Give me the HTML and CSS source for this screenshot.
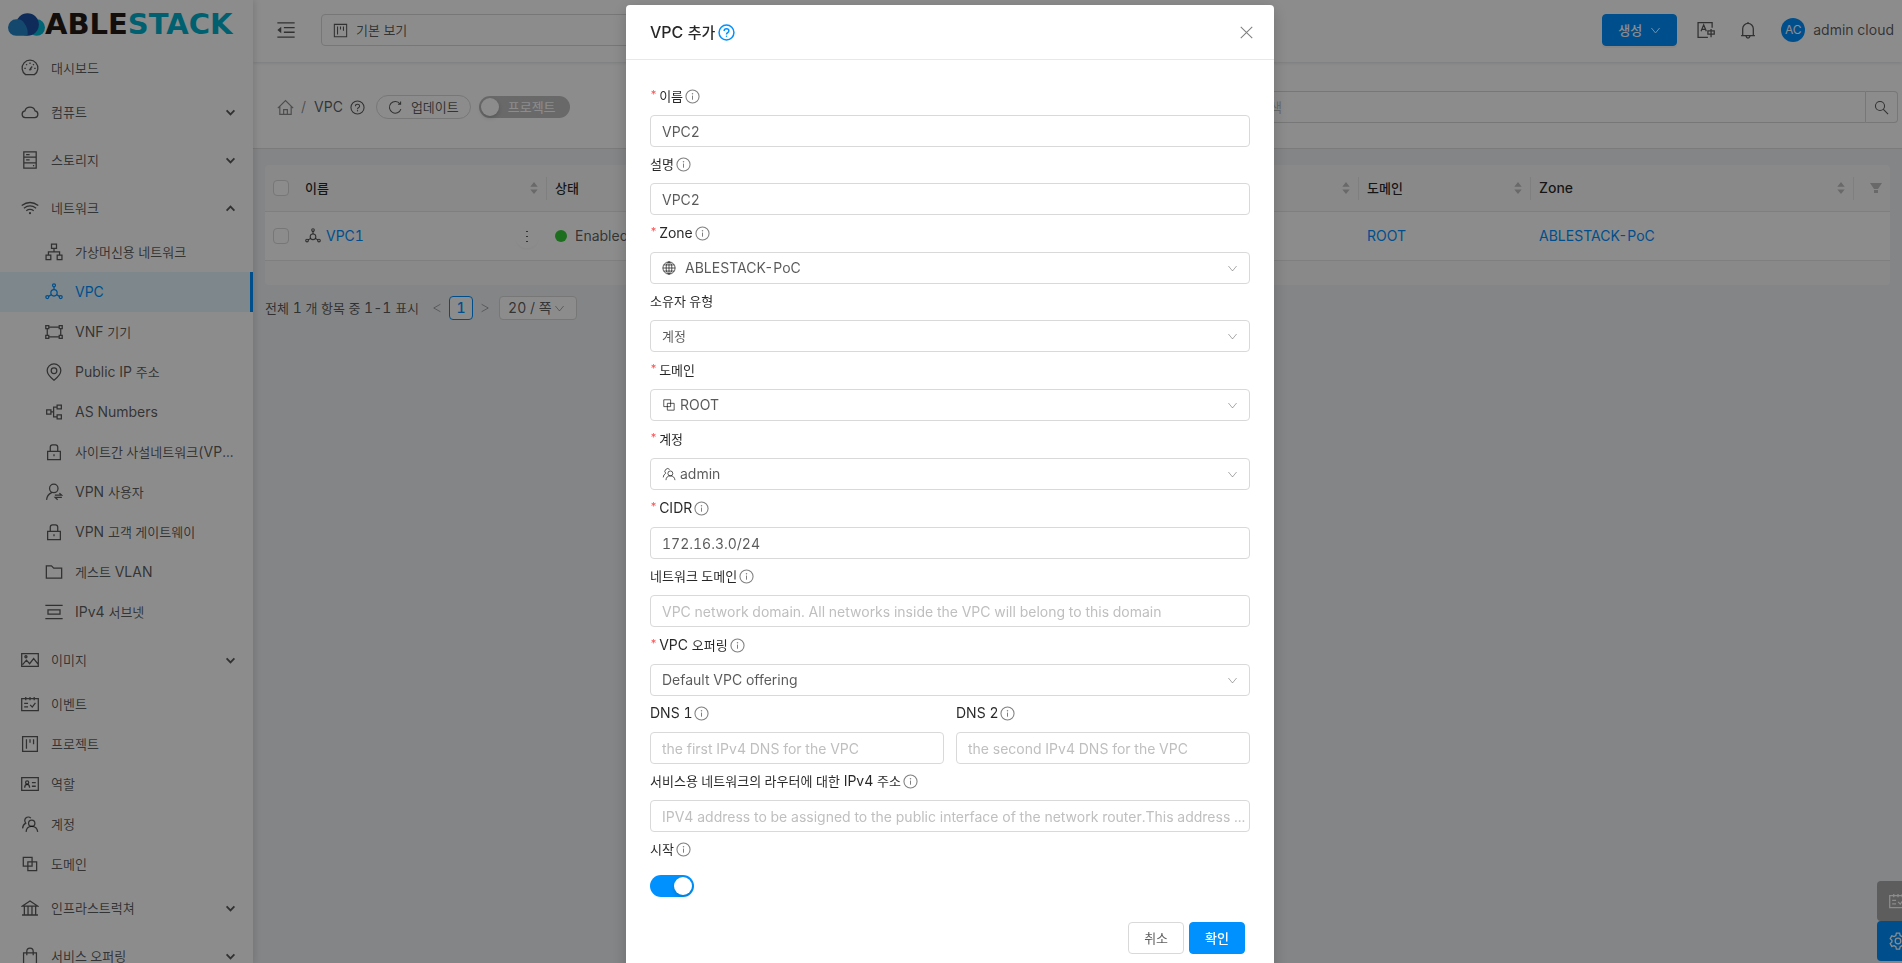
FILE: index.html
```html
<!DOCTYPE html>
<html lang="ko">
<head>
<meta charset="utf-8">
<title>VPC - ABLESTACK</title>
<link rel="stylesheet" href="styles.css">
</head>
<body>
<svg class="sprite" aria-hidden="true">
  <symbol id="dashboard" viewBox="0 0 1024 1024"><path d="M262 888a448 448 0 1 1 500 0zM512 200v80M290 292l56 56M734 292l-56 56M190 528h84M750 528h84M512 560l130-130M475 590a50 50 0 1 0 66-66"/></symbol>
  <symbol id="cloud" viewBox="0 0 1024 1024"><path d="M240 832a192 192 0 0 1-18-380 304 304 0 0 1 580 0 192 192 0 0 1-18 380z"/></symbol>
  <symbol id="storage" viewBox="0 0 1024 1024"><path d="M160 48h704v928H160zM160 352h704M160 672h704M290 200h200M290 510h200M680 826h70"/></symbol>
  <symbol id="wifi" viewBox="0 0 1024 1024"><path d="M40 370q472-340 944 0M165 520q347-250 694 0M300 670q212-150 424 0"/><circle class="solid" cx="512" cy="806" r="62"/></symbol>
  <symbol id="apartment" viewBox="0 0 1024 1024"><path d="M370 60h284v250H370zM60 690h270v260H60zM694 690h270v260H694zM512 310v190M195 690V500h634v190"/></symbol>
  <symbol id="vpc" viewBox="0 0 1024 1024"><circle cx="512" cy="560" r="180"/><circle cx="512" cy="130" r="84"/><circle cx="130" cy="800" r="84"/><circle cx="894" cy="800" r="84"/><path d="M512 214v166M204 760l150-90M820 760l-150-90"/></symbol>
  <symbol id="gateway" viewBox="0 0 1024 1024"><path d="M44 154h170v170H44zM810 154h170v170H810zM44 700h170v170H44zM810 700h170v170H810zM214 239h596M214 785h596M129 324v376M895 324v376"/></symbol>
  <symbol id="pin" viewBox="0 0 1024 1024"><path d="M512 976C330 840 124 680 124 430a388 376 0 0 1 776 0c0 250-206 410-388 546z"/><circle cx="512" cy="440" r="160"/></symbol>
  <symbol id="nodes" viewBox="0 0 1024 1024"><path d="M96 390h240v240H96zM690 120h240v220H690zM690 680h240v220H690zM336 510h150M690 230H490v560h200"/></symbol>
  <symbol id="lock" viewBox="0 0 1024 1024"><path d="M150 470h724v470H150zM300 470V240q0-130 130-130h164q130 0 130 130v230M512 640v120"/></symbol>
  <symbol id="userswap" viewBox="0 0 1024 1024"><circle cx="500" cy="310" r="240"/><path d="M90 960q20-290 290-410M560 690h380l-120-110M960 820H580l140 130"/></symbol>
  <symbol id="folder" viewBox="0 0 1024 1024"><path d="M76 166h290l130 126h452v566H76z"/></symbol>
  <symbol id="subnet" viewBox="0 0 1024 1024"><path d="M20 140h984M20 884h984M170 388h684v248H170z"/></symbol>
  <symbol id="image" viewBox="0 0 1024 1024"><path d="M40 150h944v724H40zM90 780l220-260 180 200 230-290 250 320"/><circle cx="280" cy="330" r="60"/></symbol>
  <symbol id="event" viewBox="0 0 1024 1024"><path d="M40 200h944v690H40zM270 110v190M512 110v190M750 110v190M180 480h220M180 680h220M520 560l120 130 180-240"/></symbol>
  <symbol id="project" viewBox="0 0 1024 1024"><path d="M92 92h840v840H92zM310 240v540M512 240v200M714 240v290"/></symbol>
  <symbol id="idcard" viewBox="0 0 1024 1024"><path d="M40 150h944v724H40zM620 430h220M620 640h220M210 720q0-190 140-190t140 190"/><circle cx="350" cy="430" r="90"/></symbol>
  <symbol id="team" viewBox="0 0 1024 1024"><circle cx="610" cy="470" r="180"/><path d="M290 960q20-310 320-310t340 310M90 760q10-210 180-300A200 200 0 1 1 560 180"/></symbol>
  <symbol id="domain" viewBox="0 0 1024 1024"><path d="M130 130h500v500H130zM390 390h500v500H390z"/></symbol>
  <symbol id="bank" viewBox="0 0 1024 1024"><path d="M80 400L512 110l432 290zM190 400v480M400 400v480M624 400v480M834 400v480M60 910h904"/></symbol>
  <symbol id="bag" viewBox="0 0 1024 1024"><path d="M146 330h732v620H146zM330 470V260a182 190 0 0 1 364 0v210"/></symbol>
  <symbol id="chev" viewBox="0 0 1024 1024"><path d="M130 280l382 460 382-460"/></symbol>
  <symbol id="arrow" viewBox="0 0 1024 1024"><path d="M150 320l362 370 362-370"/></symbol>
  <symbol id="left" viewBox="0 0 1024 1024"><path d="M860 130L180 512l680 382"/></symbol>
  <symbol id="right" viewBox="0 0 1024 1024"><path d="M164 130l680 382-680 382"/></symbol>
  <symbol id="fold" viewBox="0 0 1024 1024"><path d="M20 100h984M390 380h614M390 640h614M20 920h984"/><path class="solid" d="M20 512L240 330v364z"/></symbol>
  <symbol id="home" viewBox="0 0 1024 1024"><path d="M50 550L512 90l462 460M170 440v490h684V440M400 930V640h224v290"/></symbol>
  <symbol id="question" viewBox="0 0 1024 1024"><circle cx="512" cy="512" r="448"/><path d="M370 420q0-130 142-130t142 120q0 80-80 115-62 28-62 110"/><circle class="solid" cx="512" cy="735" r="44"/></symbol>
  <symbol id="info" viewBox="0 0 1024 1024"><circle cx="512" cy="512" r="448"/><path d="M512 450v280"/><circle class="solid" cx="512" cy="330" r="50"/></symbol>
  <symbol id="reload" viewBox="0 0 1024 1024"><path d="M880 620A400 400 0 1 1 820 260M860 110v180H680"/></symbol>
  <symbol id="search" viewBox="0 0 1024 1024"><circle cx="410" cy="410" r="310"/><path d="M640 640l320 320"/></symbol>
  <symbol id="bell" viewBox="0 0 1024 1024"><path d="M120 830h784M210 830V440a302 302 0 0 1 604 0v390M512 50v90M400 860q20 110 112 110t112-110"/></symbol>
  <symbol id="translate" viewBox="0 0 1024 1024"><path d="M860 390V90H60v840h560M230 580l150-360 150 360M280 470h200M620 560h360v180H620zM800 450v480"/></symbol>
  <symbol id="close" viewBox="0 0 1024 1024"><path d="M120 120l784 784M904 120L120 904"/></symbol>
  <symbol id="globe" viewBox="0 0 1024 1024"><circle cx="512" cy="512" r="448"/><ellipse cx="512" cy="512" rx="210" ry="448"/><path d="M512 64v896M64 512h896M130 290h764M130 734h764"/></symbol>
  <symbol id="sorter" viewBox="0 0 8 14"><path class="solid" d="M0 5l4-5 4 5zM0 8l4 5 4-5z"/></symbol>
  <symbol id="filter" viewBox="0 0 12 12"><path class="solid" d="M0 1h12L8 7H4zM4 8h4v3H4z"/></symbol>
  <symbol id="more" viewBox="0 0 4 14"><path class="solid" d="M1 2h2v1H1zM1 7h2v1H1zM1 12h2v1H1z"/></symbol>
  <symbol id="gear" viewBox="0 0 1024 1024"><circle cx="512" cy="512" r="160"/><path d="M420 70h184l30 130 100 58 130-38 92 158-98 92v100l98 92-92 158-130-38-100 58-30 130H420l-30-130-100-58-130 38-92-158 98-92V470l-98-92 92-158 130 38 100-58z"/></symbol>
</svg>

<div class="app">
  <aside class="sidebar">
    <div class="brand">
      <svg class="brand-mark" viewBox="0 0 36 22"><circle cx="28" cy="14" r="8" fill="#00b8d4"/><circle cx="19" cy="11" r="11" fill="#1d4fa3"/><path d="M8 6a8 8 0 0 1 8 4q4 5 3 12H8A8 8 0 0 1 8 6z" fill="#2585c7"/></svg>
      <span class="brand-name"><span class="brand-dark">ABLE</span><span class="brand-teal">STACK</span></span>
    </div>
    <nav class="menu">
      <a class="item ko" href="#"><svg class="icon"><use href="#dashboard"/></svg>대시보드</a>
      <a class="item group ko" href="#"><svg class="icon"><use href="#cloud"/></svg>컴퓨트<svg class="arrow"><use href="#arrow"/></svg></a>
      <a class="item group ko" href="#"><svg class="icon"><use href="#storage"/></svg>스토리지<svg class="arrow"><use href="#arrow"/></svg></a>
      <a class="item group ko" href="#"><svg class="icon"><use href="#wifi"/></svg>네트워크<svg class="arrow up"><use href="#arrow"/></svg></a>
      <div class="submenu">
        <a class="item" href="#"><svg class="icon"><use href="#apartment"/></svg><span class="ko">가상머신용 네트워크</span></a>
        <a class="item active" href="#"><svg class="icon"><use href="#vpc"/></svg>VPC</a>
        <a class="item" href="#"><svg class="icon"><use href="#gateway"/></svg><span>VNF <span class="ko">기기</span></span></a>
        <a class="item" href="#"><svg class="icon"><use href="#pin"/></svg><span>Public IP <span class="ko">주소</span></span></a>
        <a class="item" href="#"><svg class="icon"><use href="#nodes"/></svg>AS Numbers</a>
        <a class="item" href="#"><svg class="icon"><use href="#lock"/></svg><span><span class="ko">사이트간 사설네트워크</span>(VP...</span></a>
        <a class="item" href="#"><svg class="icon"><use href="#userswap"/></svg><span>VPN <span class="ko">사용자</span></span></a>
        <a class="item" href="#"><svg class="icon"><use href="#lock"/></svg><span>VPN <span class="ko">고객 게이트웨이</span></span></a>
        <a class="item" href="#"><svg class="icon"><use href="#folder"/></svg><span><span class="ko">게스트</span> VLAN</span></a>
        <a class="item" href="#"><svg class="icon"><use href="#subnet"/></svg><span>IPv4 <span class="ko">서브넷</span></span></a>
      </div>
      <a class="item group ko" href="#"><svg class="icon"><use href="#image"/></svg>이미지<svg class="arrow"><use href="#arrow"/></svg></a>
      <a class="item ko" href="#"><svg class="icon"><use href="#event"/></svg>이벤트</a>
      <a class="item ko" href="#"><svg class="icon"><use href="#project"/></svg>프로젝트</a>
      <a class="item ko" href="#"><svg class="icon"><use href="#idcard"/></svg>역할</a>
      <a class="item ko" href="#"><svg class="icon"><use href="#team"/></svg>계정</a>
      <a class="item ko" href="#"><svg class="icon"><use href="#domain"/></svg>도메인</a>
      <a class="item group ko" href="#"><svg class="icon"><use href="#bank"/></svg>인프라스트럭쳐<svg class="arrow"><use href="#arrow"/></svg></a>
      <a class="item group ko" href="#"><svg class="icon"><use href="#bag"/></svg>서비스 오퍼링<svg class="arrow"><use href="#arrow"/></svg></a>
    </nav>
  </aside>

  <div class="main">
    <header class="topbar">
      <button class="plain" type="button" aria-label="메뉴 접기"><svg class="icon"><use href="#fold"/></svg></button>
      <div class="field view-select">
        <svg class="icon small"><use href="#project"/></svg>
        <select class="ko" aria-label="보기"><option>기본 보기</option></select>
      </div>
      <div class="tools">
        <button class="btn primary create ko" type="button">생성<svg class="caret"><use href="#chev"/></svg></button>
        <button class="plain" type="button" aria-label="언어"><svg class="icon"><use href="#translate"/></svg></button>
        <button class="plain" type="button" aria-label="알림"><svg class="icon"><use href="#bell"/></svg></button>
        <a class="user" href="#"><span class="avatar">AC</span>admin cloud</a>
      </div>
    </header>

    <div class="crumbs">
      <a class="home" href="#" aria-label="홈"><svg class="icon mid"><use href="#home"/></svg></a>
      <span class="slash">/</span>
      <span class="crumb">VPC</span>
      <svg class="icon small"><use href="#question"/></svg>
      <button class="pill ko" type="button"><svg class="icon small"><use href="#reload"/></svg>업데이트</button>
      <button class="toggle off ko" type="button" role="switch" aria-checked="false"><span class="knob"></span>프로젝트</button>
      <form class="search">
        <input class="ko" type="text" placeholder="검색" aria-label="검색">
        <button type="button" aria-label="검색"><svg class="icon small"><use href="#search"/></svg></button>
      </form>
    </div>

    <div class="content">
      <table class="grid">
        <colgroup><col class="c-check"><col class="c-name"><col class="c-state"><col><col class="c-domain"><col class="c-zone"><col class="c-filter"></colgroup>
        <thead>
          <tr>
            <th><input type="checkbox" aria-label="모두 선택"></th>
            <th class="split"><div class="head ko">이름<svg class="sorter"><use href="#sorter"/></svg></div></th>
            <th class="ko">상태</th>
            <th class="split"><div class="head end"><svg class="sorter"><use href="#sorter"/></svg></div></th>
            <th class="split"><div class="head ko">도메인<svg class="sorter"><use href="#sorter"/></svg></div></th>
            <th class="split"><div class="head">Zone<svg class="sorter"><use href="#sorter"/></svg></div></th>
            <th><div class="head end"><svg class="filter"><use href="#filter"/></svg></div></th>
          </tr>
        </thead>
        <tbody>
          <tr>
            <td><input type="checkbox" aria-label="VPC1 선택"></td>
            <td><div class="name"><svg class="icon row-icon"><use href="#vpc"/></svg><a href="#">VPC1</a><button class="more" type="button" aria-label="작업"><svg><use href="#more"/></svg></button></div></td>
            <td><div class="state"><span class="dot"></span>Enabled</div></td>
            <td></td>
            <td><a href="#">ROOT</a></td>
            <td><a href="#">ABLESTACK-PoC</a></td>
            <td></td>
          </tr>
        </tbody>
      </table>
      <div class="grid-foot"></div>
      <div class="pager">
        <span><span class="ko">전체</span> 1 <span class="ko">개 항목 중</span> 1-1 <span class="ko">표시</span></span>
        <div class="pages">
          <button class="step" type="button" aria-label="이전"><svg><use href="#left"/></svg></button>
          <button class="page" type="button">1</button>
          <button class="step" type="button" aria-label="다음"><svg><use href="#right"/></svg></button>
        </div>
        <div class="size"><select aria-label="쪽 크기"><option>20 / 쪽</option></select><svg class="caret"><use href="#chev"/></svg></div>
      </div>
    </div>
  </div>
</div>

<div class="dock">
  <button type="button" aria-label="이벤트"><svg class="icon"><use href="#event"/></svg></button>
  <button class="blue" type="button" aria-label="설정"><svg class="icon"><use href="#gear"/></svg></button>
</div>

<div class="mask">
  <section class="modal" role="dialog" aria-labelledby="title">
    <header class="modal-head">
      <h1 id="title">VPC <span class="ko-lg">추가</span></h1>
      <a class="help" href="#" aria-label="도움말"><svg class="icon help-icon"><use href="#question"/></svg></a>
      <button class="plain close" type="button" aria-label="닫기"><svg class="icon small"><use href="#close"/></svg></button>
    </header>
    <form class="form">
      <div class="row req">
        <label for="name"><span class="ko">이름</span><svg class="info"><use href="#info"/></svg></label>
        <input class="field" id="name" type="text" value="VPC2">
      </div>
      <div class="row">
        <label for="desc"><span class="ko">설명</span><svg class="info"><use href="#info"/></svg></label>
        <input class="field" id="desc" type="text" value="VPC2">
      </div>
      <div class="row req">
        <label for="zone">Zone<svg class="info"><use href="#info"/></svg></label>
        <div class="field wide-gap"><svg class="icon tiny"><use href="#globe"/></svg><select id="zone"><option>ABLESTACK-PoC</option></select><svg class="caret"><use href="#chev"/></svg></div>
      </div>
      <div class="row">
        <label for="owner"><span class="ko">소유자 유형</span></label>
        <div class="field"><select class="ko" id="owner"><option>계정</option></select><svg class="caret"><use href="#chev"/></svg></div>
      </div>
      <div class="row req">
        <label for="domain-id"><span class="ko">도메인</span></label>
        <div class="field"><svg class="icon tiny"><use href="#domain"/></svg><select id="domain-id"><option>ROOT</option></select><svg class="caret"><use href="#chev"/></svg></div>
      </div>
      <div class="row req">
        <label for="account"><span class="ko">계정</span></label>
        <div class="field"><svg class="icon tiny"><use href="#team"/></svg><select id="account"><option>admin</option></select><svg class="caret"><use href="#chev"/></svg></div>
      </div>
      <div class="row req">
        <label for="cidr">CIDR<svg class="info"><use href="#info"/></svg></label>
        <input class="field" id="cidr" type="text" value="172.16.3.0/24">
      </div>
      <div class="row">
        <label for="netdomain"><span class="ko">네트워크 도메인</span><svg class="info"><use href="#info"/></svg></label>
        <input class="field" id="netdomain" type="text" placeholder="VPC network domain. All networks inside the VPC will belong to this domain">
      </div>
      <div class="row req">
        <label for="offering"><span>VPC <span class="ko">오퍼링</span></span><svg class="info"><use href="#info"/></svg></label>
        <div class="field"><select id="offering"><option>Default VPC offering</option></select><svg class="caret"><use href="#chev"/></svg></div>
      </div>
      <div class="pair">
        <div class="row">
          <label for="dns1">DNS 1<svg class="info"><use href="#info"/></svg></label>
          <input class="field" id="dns1" type="text" placeholder="the first IPv4 DNS for the VPC">
        </div>
        <div class="row">
          <label for="dns2">DNS 2<svg class="info"><use href="#info"/></svg></label>
          <input class="field" id="dns2" type="text" placeholder="the second IPv4 DNS for the VPC">
        </div>
      </div>
      <div class="row">
        <label for="router"><span><span class="ko">서비스용 네트워크의 라우터에 대한</span> IPv4 <span class="ko">주소</span></span><svg class="info"><use href="#info"/></svg></label>
        <input class="field" id="router" type="text" placeholder="IPV4 address to be assigned to the public interface of the network router.This address ...">
      </div>
      <div class="row">
        <label for="start"><span class="ko">시작</span><svg class="info"><use href="#info"/></svg></label>
        <button class="toggle on" id="start" type="button" role="switch" aria-checked="true"><span class="knob"></span></button>
      </div>
      <div class="actions">
        <button class="btn ko" type="button">취소</button>
        <button class="btn primary ko" type="button">확인</button>
      </div>
    </form>
  </section>
</div>
</body>
</html>
```

FILE: styles.css
```css
:root {
  --primary: #0091ff;
  --text: rgba(0, 0, 0, 0.65);
  --heading: rgba(0, 0, 0, 0.85);
  --border: #d9d9d9;
}

* { box-sizing: border-box; }

body {
  margin: 0;
  height: 100vh;
  overflow: hidden;
  background: #f0f2f5;
  color: var(--text);
  font: 14px/22px Inter, "Noto Sans CJK KR", sans-serif;
  font-variant-numeric: tabular-nums;
}

a { color: var(--primary); text-decoration: none; }

button, input, select {
  font: inherit;
  font-variant-numeric: tabular-nums;
  color: inherit;
}

.ko, button.ko, input.ko, select.ko { font-size: 13px; }
.ko-lg { font-size: 15px; }

.sprite { display: none; }

svg { flex: none; }

.icon, .arrow, .caret, .info, .step svg {
  fill: none;
  stroke: currentColor;
  stroke-width: 72;
}

.solid { fill: currentColor; stroke: none; }

.icon { width: 18px; height: 18px; }
.icon.mid { width: 17px; height: 17px; }
.icon.small { width: 15px; height: 15px; }
.icon.tiny { width: 14px; height: 14px; }

.app { display: flex; height: 100vh; }

/* Sidebar */

.sidebar {
  flex: none;
  width: 253px;
  background: #fff;
  box-shadow: 2px 0 6px rgba(0, 21, 41, 0.12);
  overflow: hidden;
  z-index: 1;
}

.brand {
  display: flex;
  align-items: center;
  height: 48px;
  padding: 0 8px;
}

.brand-mark { width: 37px; height: 23px; }

.brand-name {
  font: bold 29px/48px "DejaVu Sans", sans-serif;
}

.brand-dark { color: #231815; }
.brand-teal { color: #00b0cb; }

.item {
  display: flex;
  align-items: center;
  gap: 12px;
  height: 40px;
  padding: 0 17px 0 21px;
  color: var(--text);
  white-space: nowrap;
}

.group { margin-top: 4px; }
.group + .group { margin-top: 8px; }
.group + .item:not(.group) { margin-top: 4px; }

.arrow {
  width: 11px;
  height: 11px;
  margin-left: auto;
  stroke-width: 170;
}

.arrow.up { transform: rotate(180deg); }

.submenu { margin: 4px 0 8px; }
.submenu + .group { margin-top: 0; }
.submenu .item { padding-left: 45px; }

.item.active {
  background: #e6f7ff;
  border-right: 3px solid var(--primary);
  color: var(--primary);
}

/* Top bar */

.main { flex: 1; min-width: 0; }

.topbar {
  display: flex;
  align-items: center;
  gap: 26px;
  height: 62px;
  padding: 0 8px 2px 24px;
  background: #fff;
  box-shadow: 0 1px 3px rgba(0, 21, 41, 0.12);
  position: relative;
}

.plain {
  display: flex;
  padding: 0;
  border: 0;
  background: none;
}

.field {
  display: flex;
  align-items: center;
  width: 100%;
  height: 32px;
  padding: 0 11px;
  border: 1px solid var(--border);
  border-radius: 4px;
  background: #fff;
}

input.field { padding-right: 4px; }

select {
  flex: 1;
  min-width: 0;
  padding: 0;
  border: 0;
  background: none;
  appearance: none;
}

.view-select { width: 400px; gap: 8px; }

.tools {
  display: flex;
  align-items: center;
  gap: 24px;
  margin-left: auto;
}

.btn {
  display: flex;
  align-items: center;
  justify-content: center;
  height: 32px;
  padding: 0 15px;
  border: 1px solid var(--border);
  border-radius: 4px;
  background: #fff;
}

.btn.primary {
  border-color: var(--primary);
  background: var(--primary);
  color: #fff;
  font-weight: 500;
}

.create {
  gap: 8px;
  margin-right: -4px;
  box-shadow: 0 2px 0 rgba(0, 0, 0, 0.04);
}

.caret { width: 11px; height: 11px; stroke-width: 90; }

.user {
  display: flex;
  align-items: center;
  gap: 8px;
  color: var(--text);
}

.avatar {
  width: 24px;
  height: 24px;
  border-radius: 50%;
  background: var(--primary);
  color: #fff;
  font-size: 12px;
  line-height: 24px;
  text-align: center;
}

/* Breadcrumb bar */

.crumbs {
  display: flex;
  align-items: center;
  height: 87px;
  padding: 4px 4px 0 24px;
  border-bottom: 1px solid #e0e0e0;
  background: #fff;
}

.home { display: flex; color: rgba(0, 0, 0, 0.45); }
.slash { margin: 0 8px 0 7px; color: rgba(0, 0, 0, 0.45); }
.crumb { margin-right: 7px; }

.pill {
  display: flex;
  align-items: center;
  gap: 8px;
  height: 24px;
  margin: 0 8px 0 11px;
  padding: 0 11px;
  border: 1px solid var(--border);
  border-radius: 12px;
  background: #fff;
}

.toggle {
  display: flex;
  align-items: center;
  height: 22px;
  padding: 2px;
  border: 0;
  border-radius: 11px;
  color: #fff;
}

.knob {
  width: 18px;
  height: 18px;
  border-radius: 50%;
  background: #fff;
  box-shadow: 0 2px 4px rgba(0, 35, 11, 0.2);
}

.toggle.off { gap: 9px; padding-right: 14px; background: #bfbfbf; }
.toggle.on { justify-content: flex-end; width: 44px; background: var(--primary); }

.search {
  display: flex;
  width: 652px;
  height: 32px;
  margin-left: auto;
}

.search input {
  flex: 1;
  min-width: 0;
  padding: 0 11px;
  border: 1px solid var(--border);
  border-radius: 4px 0 0 4px;
}

.search button {
  display: flex;
  align-items: center;
  justify-content: center;
  width: 32px;
  padding: 0;
  border: 1px solid var(--border);
  border-left: 0;
  border-radius: 0 4px 4px 0;
  background: #fff;
}

input::placeholder { color: #bfbfbf; opacity: 1; }

/* Table */

.content { padding: 16px 12px; }

.grid {
  width: 100%;
  border-spacing: 0;
  table-layout: fixed;
}

.c-check { width: 32px; }
.c-name { width: 250px; }
.c-state { width: 120px; }
.c-domain { width: 172px; }
.c-zone { width: 323px; }
.c-filter { width: 36px; }

.grid th, .grid td {
  padding: 0 8px;
  border-bottom: 1px solid #e8e8e8;
  text-align: left;
}

.grid th {
  height: 47px;
  background: #fafafa;
  color: var(--heading);
  font-weight: 500;
}

.grid td { height: 49px; background: #fff; }
.grid th:first-child { border-top-left-radius: 4px; }
.grid th:last-child { border-top-right-radius: 4px; }

.grid th.split {
  background: linear-gradient(#e8e8e8, #e8e8e8) right center / 1px 23px no-repeat #fafafa;
}

.grid input {
  display: block;
  width: 16px;
  height: 16px;
  margin: 0;
  border: 1px solid var(--border);
  border-radius: 4px;
  background: #fff;
  appearance: none;
}

.head { display: flex; align-items: center; justify-content: space-between; }
.head.end { justify-content: flex-end; }
.sorter, .filter { color: #bfbfbf; }
.sorter { width: 8px; height: 13px; margin-right: 1px; }
.filter { width: 12px; height: 12px; }

.name { display: flex; align-items: center; gap: 5px; }
.row-icon { width: 16px; height: 16px; }

.more {
  display: flex;
  align-items: center;
  justify-content: center;
  width: 24px;
  height: 24px;
  margin-left: auto;
  padding: 0;
  border: 0;
  border-radius: 50%;
  background: none;
  box-shadow: 0 2px 0 rgba(0, 0, 0, 0.02);
}

.more svg { width: 4px; height: 14px; }

.state { display: flex; align-items: center; gap: 8px; }
.dot { width: 12px; height: 12px; border-radius: 50%; background: #36c93a; }

.grid-foot {
  height: 24px;
  border-radius: 0 0 4px 4px;
  background: #fafafa;
}

.pager {
  display: flex;
  align-items: center;
  margin-top: 11px;
}

.pages { display: flex; margin: 0 2px 0 6px; }

.step, .page {
  display: flex;
  align-items: center;
  justify-content: center;
  width: 24px;
  height: 24px;
  padding: 0;
  border: 0;
  background: none;
}

.step svg { width: 10px; height: 10px; color: rgba(0, 0, 0, 0.45); }

.page {
  border: 1px solid var(--primary);
  border-radius: 4px;
  background: #fff;
  color: var(--primary);
  font-weight: 500;
}

.size {
  display: flex;
  align-items: center;
  width: 78px;
  height: 24px;
  padding: 0 11px 0 8px;
  border: 1px solid var(--border);
  border-radius: 4px;
  background: #fff;
}

.size .caret { color: rgba(0, 0, 0, 0.35); }

/* Floating buttons */

.dock {
  position: fixed;
  right: 0;
  bottom: 2px;
  width: 25px;
  overflow: hidden;
}

.dock button {
  display: flex;
  align-items: center;
  width: 40px;
  height: 40px;
  padding: 0 12px;
  border: 0;
  border-radius: 4px;
  background: #a9a9a9;
  color: #fff;
}

.dock .blue { background: var(--primary); }

/* Dialog */

.mask {
  position: fixed;
  inset: 0;
  z-index: 2;
  display: flex;
  justify-content: center;
  align-items: flex-start;
  padding: 5px 2px 0 0;
  background: rgba(0, 0, 0, 0.45);
  overflow: hidden;
}

.modal {
  width: 648px;
  border-radius: 4px;
  background: #fff;
  box-shadow: 0 4px 16px rgba(0, 0, 0, 0.2);
}

.modal-head {
  display: flex;
  align-items: center;
  gap: 3px;
  height: 55px;
  padding: 0 20px 0 24px;
  border-bottom: 1px solid #e8e8e8;
}

.modal-head h1 {
  margin: 0;
  color: var(--heading);
  font-size: 16px;
  font-weight: 500;
}

.help { display: flex; }
.help-icon { width: 17px; height: 17px; stroke-width: 90; }
.close { margin-left: auto; color: rgba(0, 0, 0, 0.5); }

.form { padding: 18px 24px 24px; }

.row { padding-top: 4px; }
.row.req { padding-top: 5px; }

.row label {
  display: flex;
  align-items: center;
  gap: 2px;
  height: 32px;
  padding-bottom: 6px;
  color: var(--heading);
}

.row.req label::before {
  content: "*";
  align-self: flex-start;
  color: #ff4d4f;
  font-size: 11px;
}

.info { width: 15px; height: 15px; color: rgba(0, 0, 0, 0.5); }

.form .field .icon { margin-right: 4px; }
.form .wide-gap .icon { margin-right: 9px; }
.form .caret { color: rgba(0, 0, 0, 0.35); }

.pair {
  display: grid;
  grid-template-columns: 1fr 1fr;
  gap: 12px;
}

.row .toggle { margin-top: 7px; }

.actions {
  display: flex;
  justify-content: flex-end;
  gap: 5px;
  margin-top: 25px;
  padding-right: 5px;
}
```
